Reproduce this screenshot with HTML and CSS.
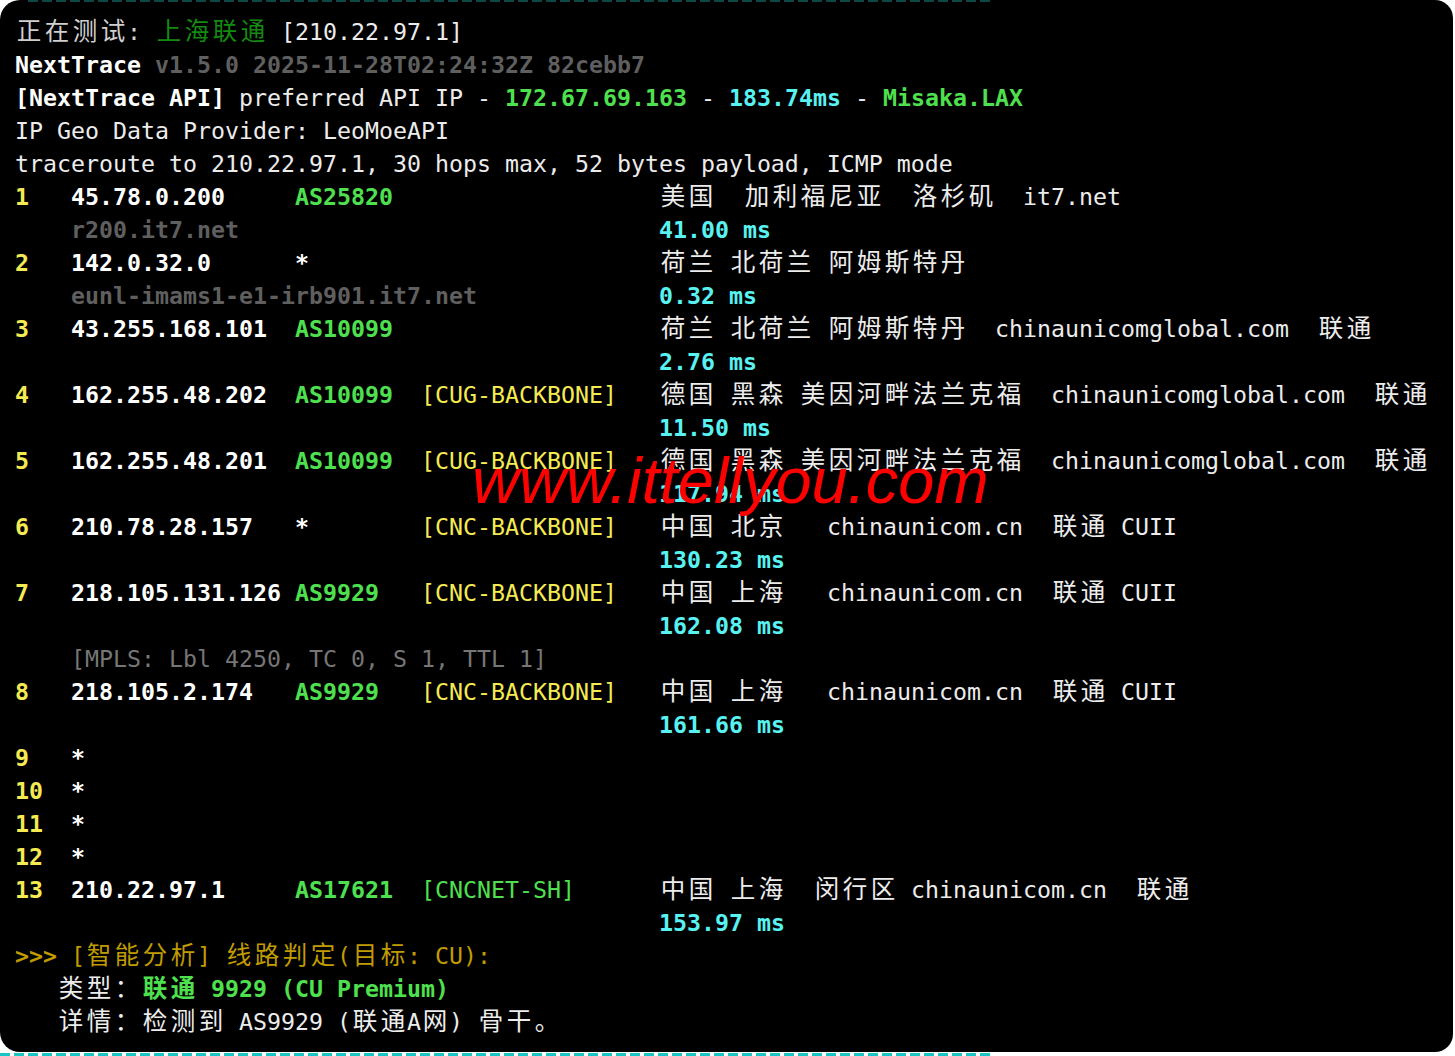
FILE: index.html
```html
<!DOCTYPE html>
<html lang="zh-CN">
<head>
    <meta charset="UTF-8">
    <title>NextTrace - 上海联通</title>
    <link rel="stylesheet" href="styles.css">
</head>
<body>
    <div class="term">
        <div class="ln"><span class="c lt">正在测试</span><span class="lt">:</span> <span class="c dg">上海联通</span> [210.22.97.1]</div>
        <div class="ln"><span class="b w">NextTrace</span> <span class="b g">v1.5.0 2025-11-28T02:24:32Z 82cebb7</span></div>
        <div class="ln"><span class="b w">[NextTrace API]</span> preferred API IP - <span class="b gr">172.67.69.163</span> - <span class="b cy">183.74ms</span> - <span class="b gr">Misaka.LAX</span></div>
        <div class="ln">IP Geo Data Provider: LeoMoeAPI</div>
        <div class="ln">traceroute to 210.22.97.1, 30 hops max, 52 bytes payload, ICMP mode</div>

        <!-- hop 1 -->
        <div class="ln hop"><span class="num">1</span><span class="ip">45.78.0.200</span><span class="asn">AS25820</span><span></span><span><span class="c">美国</span>  <span class="c">加利福尼亚</span>  <span class="c">洛杉矶</span>  it7.net</span></div>
        <div class="ln hop"><span></span><span class="host">r200.it7.net</span><span class="ms">41.00 ms</span></div>

        <!-- hop 2 -->
        <div class="ln hop"><span class="num">2</span><span class="ip">142.0.32.0</span><span class="star">*</span><span></span><span><span class="c">荷兰</span> <span class="c">北荷兰</span> <span class="c">阿姆斯特丹</span></span></div>
        <div class="ln hop"><span></span><span class="host">eunl-imams1-e1-irb901.it7.net</span><span class="ms">0.32 ms</span></div>

        <!-- hop 3 -->
        <div class="ln hop"><span class="num">3</span><span class="ip">43.255.168.101</span><span class="asn">AS10099</span><span></span><span><span class="c">荷兰</span> <span class="c">北荷兰</span> <span class="c">阿姆斯特丹</span>  chinaunicomglobal.com  <span class="c">联通</span></span></div>
        <div class="ln hop"><span></span><span class="host"></span><span class="ms">2.76 ms</span></div>

        <!-- hop 4 -->
        <div class="ln hop"><span class="num">4</span><span class="ip">162.255.48.202</span><span class="asn">AS10099</span><span class="tag">[CUG-BACKBONE]</span><span><span class="c">德国</span> <span class="c">黑森</span> <span class="c">美因河畔法兰克福</span>  chinaunicomglobal.com  <span class="c">联通</span></span></div>
        <div class="ln hop"><span></span><span class="host"></span><span class="ms">11.50 ms</span></div>

        <!-- hop 5 -->
        <div class="ln hop"><span class="num">5</span><span class="ip">162.255.48.201</span><span class="asn">AS10099</span><span class="tag">[CUG-BACKBONE]</span><span><span class="c">德国</span> <span class="c">黑森</span> <span class="c">美因河畔法兰克福</span>  chinaunicomglobal.com  <span class="c">联通</span></span></div>
        <div class="ln hop"><span></span><span class="host"></span><span class="ms">117.94 ms</span></div>

        <!-- hop 6 -->
        <div class="ln hop"><span class="num">6</span><span class="ip">210.78.28.157</span><span class="star">*</span><span class="tag">[CNC-BACKBONE]</span><span><span class="c">中国</span> <span class="c">北京</span>   chinaunicom.cn  <span class="c">联通</span> CUII</span></div>
        <div class="ln hop"><span></span><span class="host"></span><span class="ms">130.23 ms</span></div>

        <!-- hop 7 -->
        <div class="ln hop"><span class="num">7</span><span class="ip">218.105.131.126</span><span class="asn">AS9929</span><span class="tag">[CNC-BACKBONE]</span><span><span class="c">中国</span> <span class="c">上海</span>   chinaunicom.cn  <span class="c">联通</span> CUII</span></div>
        <div class="ln hop"><span></span><span class="host"></span><span class="ms">162.08 ms</span></div>
        <div class="ln mpls">[MPLS: Lbl 4250, TC 0, S 1, TTL 1]</div>

        <!-- hop 8 -->
        <div class="ln hop"><span class="num">8</span><span class="ip">218.105.2.174</span><span class="asn">AS9929</span><span class="tag">[CNC-BACKBONE]</span><span><span class="c">中国</span> <span class="c">上海</span>   chinaunicom.cn  <span class="c">联通</span> CUII</span></div>
        <div class="ln hop"><span></span><span class="host"></span><span class="ms">161.66 ms</span></div>

        <!-- hop 9-12 -->
        <div class="ln hop"><span class="num">9</span><span class="star">*</span></div>
        <div class="ln hop"><span class="num">10</span><span class="star">*</span></div>
        <div class="ln hop"><span class="num">11</span><span class="star">*</span></div>
        <div class="ln hop"><span class="num">12</span><span class="star">*</span></div>

        <!-- hop 13 -->
        <div class="ln hop"><span class="num">13</span><span class="ip">210.22.97.1</span><span class="asn">AS17621</span><span class="tag gr">[CNCNET-SH]</span><span><span class="c">中国</span> <span class="c">上海</span>  <span class="c">闵行区</span> chinaunicom.cn  <span class="c">联通</span></span></div>
        <div class="ln hop"><span></span><span class="host"></span><span class="ms">153.97 ms</span></div>

        <!-- 分析 -->
        <div class="ln dy"><span class="b">&gt;&gt;&gt;</span> [<span class="c">智能分析</span>] <span class="c">线路判定</span>(<span class="c">目标</span>: CU):</div>
        <div class="ln">   <span class="c">类型：</span><span class="b gr"><span class="c">联通</span> 9929 (CU Premium)</span></div>
        <div class="ln">   <span class="c">详情：检测到</span> AS9929 (<span class="c">联通</span>A<span class="c">网</span>) <span class="c">骨干。</span></div>

        <div class="mark">www.ittellyou.com</div>
    </div>
    <div class="rule"></div>
</body>
</html>
```

FILE: styles.css
```css
body {
    margin: 0;
    background-color: #fff;
}

/* ターミナル本体 */
.term {
    position: relative;
    width: 1453px;
    height: 1052px;
    box-sizing: border-box;
    padding: 15px 0 0 15px;
    background-color: #000;
    border-radius: 20px 18px 18px 20px;
    font-family: "DejaVu Sans Mono", "Noto Sans CJK SC", monospace;
    font-size: 23.25px;
    color: #ececec;
    white-space: pre;
    display: grid;
    grid-auto-rows: 33px;
    align-content: start;
}

/* 上端の点線 */
.term::before {
    content: "";
    position: absolute;
    left: 28px;
    top: 0;
    width: 966px;
    height: 2px;
    background: repeating-linear-gradient(90deg, #0c4944 0 10px, transparent 10px 14px);
}

.ln {
    height: 33px;
    line-height: 33px;
}

/* 全角文字は2セル幅 */
.c {
    font-size: 24.5px;
    letter-spacing: 3.5px;
    margin-left: 1.75px;
    margin-right: -1.75px;
    line-height: 1;
}

.b { font-weight: bold; }
.w { color: #fff; }
.lt { color: #cfcfcf; }
.g { color: #5f5f5f; }
.gr { color: #4fe04f; }
.cy { color: #58f2f2; }
.dg { color: #138a10; }
.dy { color: #c19c00; }

/* ホップ行 */
.hop {
    display: grid;
    grid-template-columns: 56px 224px 126px 238px auto;
}

.hop .num {
    color: #f5ea52;
    font-weight: bold;
}

.hop .ip,
.hop .star {
    color: #fff;
    font-weight: bold;
}

.hop .asn {
    color: #4fe04f;
    font-weight: bold;
}

.hop .tag {
    color: #f5ea52;
}

.hop .tag.gr {
    color: #4fe04f;
}

.hop .host {
    grid-column: 2 / 5;
    color: #5f5f5f;
    font-weight: bold;
}

.hop .ms {
    color: #58f2f2;
    font-weight: bold;
}

.mpls {
    padding-left: 56px;
    color: #767676;
}

/* 透かし */
.mark {
    position: absolute;
    left: 472px;
    top: 448px;
    font-family: "Liberation Sans", Arial, sans-serif;
    font-style: italic;
    font-size: 65px;
    line-height: 65px;
    color: #ff0000;
}

/* 下端の点線 */
.rule {
    width: 994px;
    height: 3px;
    margin-top: 1px;
    background: repeating-linear-gradient(90deg, #19c6c6 0 10px, transparent 10px 14px);
}
```
